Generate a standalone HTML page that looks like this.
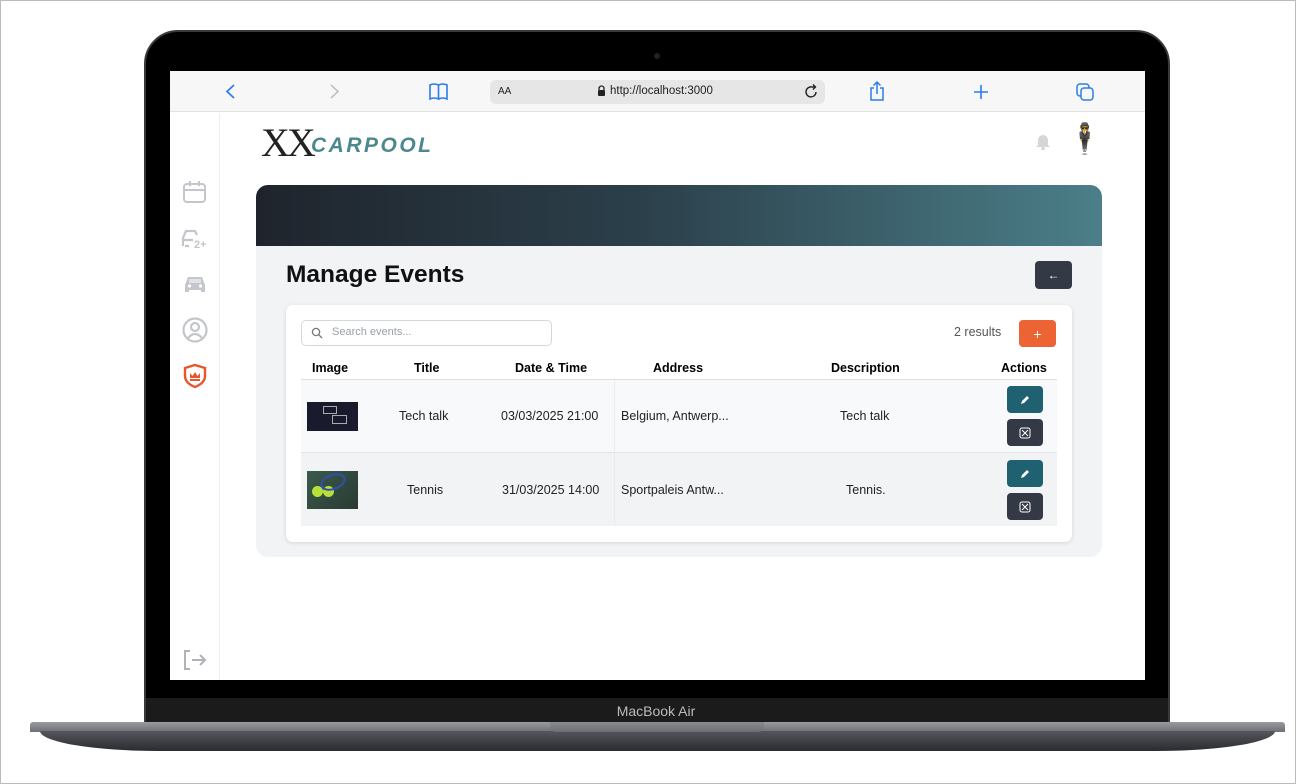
<!DOCTYPE html>
<html><head><meta charset="utf-8"><style>
*{margin:0;padding:0;box-sizing:border-box}
body{width:1296px;height:784px;background:#fff;position:relative;overflow:hidden;font-family:"Liberation Sans",sans-serif;color:#111}
.a{position:absolute}
.t{font-size:12.5px;color:#222;white-space:nowrap}
.h{font-size:12.5px;font-weight:bold;color:#000;white-space:nowrap}
.btn{position:absolute;width:36px;height:27px;border-radius:4px;display:flex;align-items:center;justify-content:center}
</style></head><body>
<div class="a" style="left:0;top:0;width:1296px;height:784px;border:1px solid #bbb"></div>
<div class="a" style="left:144px;top:30px;width:1026px;height:700px;background:#000;border-radius:34px 34px 6px 6px;border:2px solid #3a3a3c"></div>
<div class="a" style="left:146px;top:698px;width:1022px;height:26px;background:#1b1b1b"></div>
<div class="a" style="left:596px;top:703px;width:120px;text-align:center;color:#bbb;font-size:14px">MacBook Air</div>
<div class="a" style="left:654px;top:53px;width:6px;height:6px;border-radius:3px;background:#222"></div>
<div class="a" style="left:30px;top:722px;width:1255px;height:10px;background:linear-gradient(#9a9ba0,#6e6f74);border-radius:3px 3px 0 0"></div>
<div class="a" style="left:40px;top:731px;width:1235px;height:20px;background:linear-gradient(#55565b,#2a2b30);border-radius:0 0 120px 120px/0 0 20px 20px"></div>
<div class="a" style="left:550px;top:722px;width:214px;height:10px;background:linear-gradient(#8a8b90,#6c6d72);border-radius:0 0 6px 6px"></div>
<div class="a" style="left:170px;top:71px;width:975px;height:609px;background:#fff;overflow:hidden">
 <div class="a" style="left:0;top:0;width:975px;height:41px;background:#f7f7f7;border-bottom:1px solid #e2e2e2"></div>
 <svg class="a" style="left:54px;top:12px" width="14" height="17"><path d="M10 2L3 8.5L10 15" stroke="#2b7de9" stroke-width="1.7" fill="none"/></svg>
 <svg class="a" style="left:157px;top:12px" width="14" height="17"><path d="M4 2L11 8.5L4 15" stroke="#bbb" stroke-width="1.5" fill="none"/></svg>
 <svg class="a" style="left:258px;top:11px" width="22" height="19"><path d="M2 3Q6 1 10.5 3V17Q6 15 2 17Z M10.5 3Q15 1 19 3V17Q15 15 10.5 17" stroke="#2b7de9" stroke-width="1.6" fill="none"/></svg>
 <div class="a" style="left:320px;top:9px;width:335px;height:24px;background:#e6e6e6;border-radius:6px"></div>
 <div class="a" style="left:328px;top:15px;font-size:10px;color:#222">AA</div>
 <svg class="a" style="left:427px;top:14px" width="9" height="11"><path d="M2 5V3.5A2.5 2.5 0 0 1 7 3.5V5" stroke="#222" stroke-width="1.3" fill="none"/><rect x="1" y="5" width="7" height="6" rx="1" fill="#222"/></svg>
 <div class="a" style="left:440px;top:14px;font-size:11.5px;color:#222">http://localhost:3000</div>
 <svg class="a" style="left:634px;top:12px" width="16" height="18"><path d="M12 9A5 5 0 1 1 8 4H11M9 1.5L11.5 4L9 6.5" stroke="#222" stroke-width="1.4" fill="none"/></svg>
 <svg class="a" style="left:698px;top:9px" width="18" height="22"><path d="M6 8H3V20H15V8H12M9 14V2M5.5 5.5L9 2L12.5 5.5" stroke="#2b7de9" stroke-width="1.5" fill="none"/></svg>
 <svg class="a" style="left:802px;top:12px" width="18" height="18"><path d="M9 2V16M2 9H16" stroke="#2b7de9" stroke-width="1.6"/></svg>
 <svg class="a" style="left:905px;top:11px" width="20" height="20"><rect x="2" y="2" width="12" height="12" rx="3" stroke="#2b7de9" stroke-width="1.5" fill="none"/><rect x="6" y="6" width="12" height="12" rx="3" stroke="#2b7de9" stroke-width="1.5" fill="#f7f7f7"/></svg>
 <div class="a" style="left:0;top:42px;width:50px;height:567px;border-right:1px solid #eee"></div>
 <svg class="a" style="left:12px;top:108px" width="26" height="26"><rect x="2" y="5" width="21" height="18" rx="3" stroke="#c4c6cc" stroke-width="2" fill="none"/><path d="M2 11H23M8 2V7M17 2V7" stroke="#c4c6cc" stroke-width="2"/></svg>
 <svg class="a" style="left:11px;top:155px" width="28" height="24"><path d="M2 20V12L5 5H14L16 9M2 14H12M4 20H8" stroke="#c4c6cc" stroke-width="2.2" fill="none"/><text x="13" y="22" font-size="11" font-weight="bold" fill="#c4c6cc" font-family="Liberation Sans">2+</text></svg>
 <svg class="a" style="left:13px;top:202px" width="24" height="22"><path d="M2 12L5 4H19L22 12V19H18V17H6V19H2Z" fill="#c4c6cc"/><circle cx="6.5" cy="13" r="1.6" fill="#fff"/><circle cx="17.5" cy="13" r="1.6" fill="#fff"/><rect x="6" y="6" width="12" height="4" fill="#fff" opacity=".5"/></svg>
 <svg class="a" style="left:11px;top:245px" width="28" height="28"><circle cx="14" cy="14" r="11.5" stroke="#c4c6cc" stroke-width="2.2" fill="none"/><circle cx="14" cy="11" r="4" stroke="#c4c6cc" stroke-width="2.2" fill="none"/><path d="M7 22Q14 14 21 22" stroke="#c4c6cc" stroke-width="2.2" fill="none"/></svg>
 <svg class="a" style="left:13px;top:292px" width="24" height="26"><path d="M12 2L22 5V13Q22 20 12 24Q2 20 2 13V5Z" stroke="#e8572a" stroke-width="2.4" fill="none"/><path d="M7 10L9.5 13L12 9L14.5 13L17 10V15H7Z" fill="#e8572a"/><rect x="7" y="16" width="10" height="2" fill="#e8572a"/></svg>
 <svg class="a" style="left:12px;top:578px" width="26" height="22"><path d="M8 2H3V20H8M10 11H23M18 6L23 11L18 16" stroke="#b0b2b8" stroke-width="2" fill="none"/></svg>
 <div class="a" style="left:91px;top:48px;font-family:'Liberation Serif',serif;font-size:40px;color:#222;letter-spacing:-3px;font-weight:normal">XX</div>
 <div class="a" style="left:141px;top:63px;font-family:'Liberation Sans',sans-serif;font-weight:bold;font-style:italic;font-size:21px;color:#4c8890;letter-spacing:2.5px">CARPOOL</div>
 <svg class="a" style="left:864px;top:60px" width="18" height="20"><path d="M4 14V9A5 5 0 0 1 14 9V14L16 16H2Z" fill="#d6d6d8"/><circle cx="9" cy="17.5" r="1.8" fill="#d6d6d8"/></svg>
 <div class="a" style="left:896px;top:52px;width:32px;height:34px;font-size:30px;line-height:34px">🕴</div>
 <div class="a" style="left:86px;top:114px;width:846px;height:372px;background:#f2f3f5;border-radius:12px;overflow:hidden">
  <div style="height:61px;background:linear-gradient(90deg,#1f242c,#2b3f4a 45%,#4b7f89)"></div>
 </div>
 <div class="a" style="left:116px;top:190px;font-size:24.5px;font-weight:bold;color:#111">Manage Events</div>
 <div class="btn" style="left:865px;top:190px;width:37px;height:28px;background:#343a45;color:#fff;font-size:12px">←</div>
 <div class="a" style="left:116px;top:234px;width:786px;height:237px;background:#fff;border-radius:7px;box-shadow:0 1px 4px rgba(0,0,0,.12)"></div>
 <div class="a" style="left:131px;top:249px;width:251px;height:26px;border:1px solid #d5d7dc;border-radius:5px"></div>
 <svg class="a" style="left:141px;top:256px" width="12" height="12"><circle cx="5" cy="5" r="3.6" stroke="#777" stroke-width="1.3" fill="none"/><path d="M7.7 7.7L11 11" stroke="#777" stroke-width="1.3"/></svg>
 <div class="a" style="left:162px;top:255px;font-size:11px;color:#9aa0aa">Search events...</div>
 <div class="a" style="left:784px;top:254px;font-size:12.5px;color:#555">2 results</div>
 <div class="btn" style="left:849px;top:249px;width:37px;height:27px;background:#ec6434;color:#fff;font-size:14px">+</div>
 <div class="a h" style="left:142px;top:290px">Image</div>
 <div class="a h" style="left:244px;top:290px">Title</div>
 <div class="a h" style="left:345px;top:290px">Date &amp; Time</div>
 <div class="a h" style="left:483px;top:290px">Address</div>
 <div class="a h" style="left:661px;top:290px">Description</div>
 <div class="a h" style="left:831px;top:290px">Actions</div>
 <div class="a" style="left:131px;top:308px;width:756px;height:1px;background:#ddd"></div>
 <div class="a" style="left:131px;top:309px;width:756px;height:72px;background:#f8f9fb"></div>
 <div class="a" style="left:131px;top:381px;width:756px;height:1px;background:#e2e3e6"></div>
 <div class="a" style="left:131px;top:382px;width:756px;height:73px;background:#f2f3f5"></div>
 <div class="a" style="left:444px;top:309px;width:1px;height:146px;background:#ececee"></div>
 <div class="a" style="left:137px;top:331px;width:51px;height:29px;background:#191a2e"></div>
 <div class="a" style="left:153px;top:335px;width:14px;height:8px;border:1px solid #aaa"></div>
 <div class="a" style="left:162px;top:344px;width:15px;height:9px;border:1px solid #aaa"></div>
 <div class="a" style="left:137px;top:400px;width:51px;height:38px;background:linear-gradient(135deg,#3a5a4a,#2a3a34)"></div>
 <div class="a" style="left:142px;top:415px;width:11px;height:11px;border-radius:6px;background:#b8e03a"></div>
 <div class="a" style="left:153px;top:415px;width:11px;height:11px;border-radius:6px;background:#b8e03a"></div>
 <div class="a" style="left:150px;top:403px;width:26px;height:16px;border:2px solid #3050b0;border-radius:50%;transform:rotate(-20deg)"></div>
 <div class="a t" style="left:229px;top:338px">Tech talk</div>
 <div class="a t" style="left:331px;top:338px">03/03/2025 21:00</div>
 <div class="a t" style="left:451px;top:338px">Belgium, Antwerp...</div>
 <div class="a t" style="left:670px;top:338px">Tech talk</div>
 <div class="a t" style="left:237px;top:412px">Tennis</div>
 <div class="a t" style="left:332px;top:412px">31/03/2025 14:00</div>
 <div class="a t" style="left:451px;top:412px">Sportpaleis Antw...</div>
 <div class="a t" style="left:676px;top:412px">Tennis.</div>
 <div class="btn" style="left:837px;top:315px;background:#1f6170"><svg width="12" height="12"><path d="M2 10L3 7L8 2L10 4L5 9Z" fill="#fff"/></svg></div>
 <div class="btn" style="left:837px;top:348px;background:#343a45"><svg width="12" height="12"><rect x="1" y="1" width="10" height="10" rx="2" stroke="#fff" fill="none"/><path d="M3 3L9 9M9 3L3 9" stroke="#fff"/></svg></div>
 <div class="btn" style="left:837px;top:389px;background:#1f6170"><svg width="12" height="12"><path d="M2 10L3 7L8 2L10 4L5 9Z" fill="#fff"/></svg></div>
 <div class="btn" style="left:837px;top:422px;background:#343a45"><svg width="12" height="12"><rect x="1" y="1" width="10" height="10" rx="2" stroke="#fff" fill="none"/><path d="M3 3L9 9M9 3L3 9" stroke="#fff"/></svg></div>
</div>
</body></html>
